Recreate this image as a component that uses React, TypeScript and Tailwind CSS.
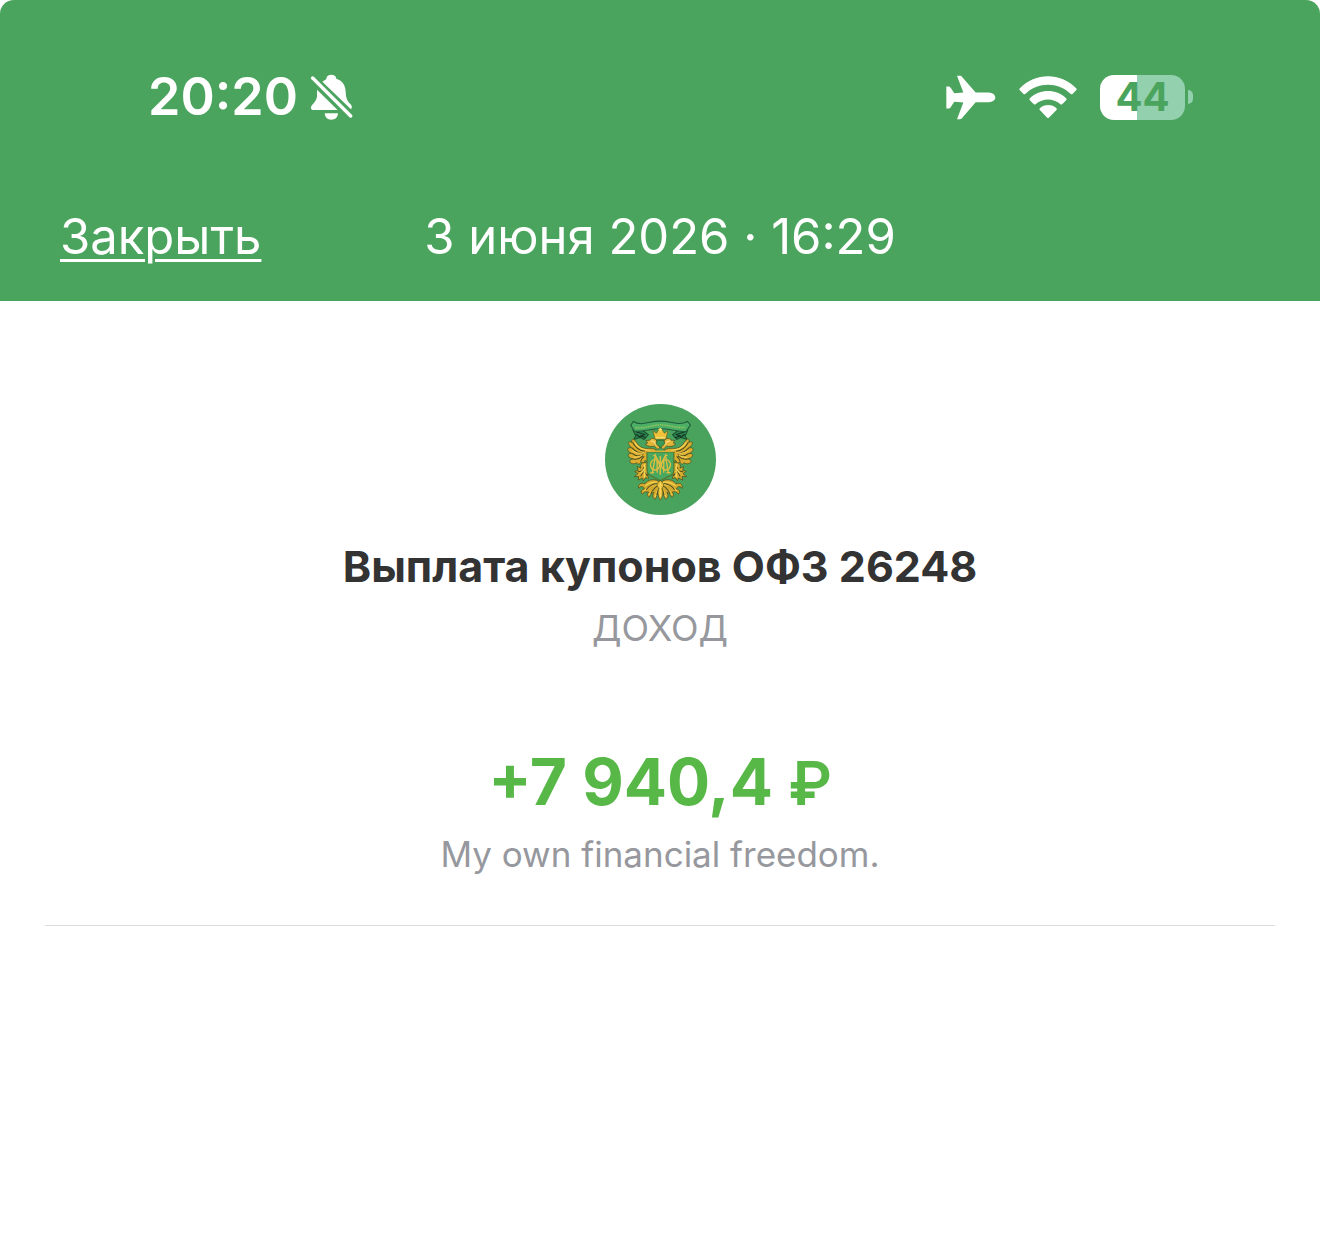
function BellOffIcon() {
  return (
    <svg viewBox="537 45 129 138" className="h-[46px] w-[43px]" fill="white" aria-label="Без звука" role="img">
      <path d="M558 92 L620 153 H548 C540 153 538 147 541 141 C549 131 557 125 558 111 Z" />
      <path d="M574 68 C580 63 585 62 586 59 C587 50 593 47 601 47 C609 47 615 50 616 59 C636 65 643 80 644 98 C645 121 650 127 659 136 C663 141 664 146 660 151 Z" />
      <path d="M581 163 H621 C620 175 613 182 601 182 C589 182 582 175 581 163 Z" />
      <path d="M545 57 L659 171" stroke="white" strokeWidth="10" strokeLinecap="round" />
    </svg>
  );
}

function PlaneIcon() {
  return (
    <svg viewBox="50 48 150 134" className="h-[45px] w-[50px]" fill="white" aria-label="Авиарежим" role="img">
      <path d="M83 50 H92 C95 50 97 52 99 54 L139 100 H178 C190 101 198 107 198 115 C198 123 190 128 178 129 H139 L99 176 C97 179 95 180 92 180 H83 L102 130 L75 128 L64 144 C62 147 60 148 57 148 H51 V82 H57 C60 82 62 83 64 86 L75 102 L102 100 Z" />
    </svg>
  );
}

function WifiIcon() {
  return (
    <svg viewBox="269 44 173 129" className="h-[43px] w-[58px]" fill="white" aria-label="Wi-Fi" role="img">
      <path d="M271 81 C317 33 394 33 440 81 Q443 84 440 87 L429 98 Q426 100 423 97 C386 61 325 61 288 97 Q285 100 282 98 L271 87 Q268 84 271 81 Z" />
      <path d="M301 111 C332 82 380 82 410 111 Q413 114 410 117 L398 129 Q395 131 392 128 C371 110 340 110 319 128 Q316 131 313 129 L301 117 Q298 114 301 111 Z" />
      <path d="M331 141 C345 128 367 128 381 141 Q383 144 381 146 L358 169 Q356 171 353 169 L331 146 Q328 144 331 141 Z" />
    </svg>
  );
}

function Battery() {
  return (
    <div className="flex items-center gap-[3px]" role="img" aria-label="Заряд 44%">
      <div className="flex h-[45px] w-[85px] items-center justify-center rounded-[14px] bg-linear-to-r from-white from-[44%] to-[#93d0ad] to-[44%] text-[40px] leading-none font-bold text-[#4aa45d]">
        44
      </div>
      <div className="h-[14px] w-[5px] rounded-r-full bg-[#93d0ad]" />
    </div>
  );
}

function WingHalf() {
  return (
    <g stroke="#4a4a1c" strokeWidth="2" strokeLinejoin="round">
      <path fill="#dcae30" d="M183 166 C169 157 154 166 140 158 C132 154 129 144 119 135 C113 134 112 139 115 145 C106 140 102 144 106 151 C108 156 113 158 116 161 C106 158 100 161 103 168 C105 173 111 175 116 177 C107 175 102 178 104 184 C107 190 113 191 118 192 C110 194 106 197 109 202 C114 208 123 207 128 203 C131 210 138 207 140 200 C143 206 150 204 151 197 L159 199 V174 H183 Z" />
      <path fill="none" strokeWidth="3" d="M116 145 C124 160 139 169 151 170 M115 161 C124 171 138 176 148 177 M116 177 C124 185 136 184 145 181 M118 192 C129 195 138 190 145 184 M139 199 C141 193 144 189 149 185" />
      <path fill="none" stroke="#f8d75b" strokeWidth="3" d="M122 145 C131 161 145 165 165 168 M115 168 C128 177 140 177 149 174 M119 187 C130 189 137 185 143 181" />
      <path fill="#e3b63a" d="M188 165 L178 155 C171 157 160 157 152 150 L159 146 L154 139 L165 138 C170 129 183 132 187 144 L194 158 Z" />
      <path fill="none" stroke="#f9e18a" strokeWidth="3" d="M168 141 C177 137 181 147 184 153" />
      <path fill="#d8ad2f" d="M155 202 C142 202 135 210 140 219 L129 214 L132 225 L122 228 L131 235 L121 243 L134 243 L132 253 L144 247 L147 255 L153 246 L162 249 L158 237 L168 237 L159 225 L163 214 Z" />
      <path fill="none" strokeWidth="3" d="M151 211 L144 226 L130 230 M147 228 L139 243 M150 229 L158 241" />
      <path fill="none" stroke="#f6d65b" strokeWidth="4" d="M149 207 L151 219 L140 233 M151 226 L150 245" />
      <path fill="#d3a92e" d="M190 256 C177 249 160 251 151 264 C140 259 131 265 133 277 C139 269 147 271 150 279 C140 279 138 290 144 294 C149 285 157 286 162 288 C155 294 158 302 164 302 C167 292 173 290 177 288 C172 297 173 306 181 308 C186 297 191 287 195 275 Z" />
      <path fill="none" stroke="#f5d451" strokeWidth="3" d="M190 260 C175 257 163 261 152 270 M190 265 C172 265 160 273 149 284 M192 270 C178 275 169 284 163 296 M194 273 C187 282 182 292 180 303" />
      <path fill="none" strokeWidth="3" d="M185 263 C171 265 161 272 155 281 M188 270 C176 278 171 285 168 293 M192 277 C188 283 187 289 185 296" />
    </g>
  );
}

function RibbonEnd() {
  return (
    <g stroke="#1c5133" strokeWidth="3" strokeLinejoin="round">
      <path fill="#29834a" d="M117 108 L125 126 L119 136 L137 130 L149 136 L161 122 L145 110 Z" />
      <path fill="none" stroke="#162f24" d="M126 114 L151 122 L138 126 L154 131 M126 121 L139 131" />
    </g>
  );
}

function Emblem() {
  return (
    <svg viewBox="28 27 333 333" className="size-[111px]" role="img" aria-label="Герб Министерства финансов">
      <circle cx="194.5" cy="193.5" r="166.5" fill="#49a35d" />
      <g transform="translate(-11 -8) scale(1.05 1.04)">
        <RibbonEnd />
        <g transform="translate(391 0) scale(-1 1)">
          <RibbonEnd />
        </g>
        <path d="M118 84 C143 99 161 83 195 83 C229 83 247 98 273 84 L281 94 L269 113 C242 113 223 105 195 105 C168 105 146 114 121 112 L111 95 Z" fill="#4caf65" stroke="#20593a" strokeWidth="3" />
        <path d="M125 102 C152 105 169 94 195 94 C221 94 239 104 266 101" fill="none" stroke="#9dc95d" strokeWidth="4" strokeDasharray="3 2" />
        <WingHalf />
        <g transform="translate(391 0) scale(-1 1)">
          <WingHalf />
        </g>
        <path d="M180 135 L174 110 L184 118 L191 107 H200 L207 118 L217 110 L211 135 Z" fill="#efc23a" stroke="#5d6123" strokeWidth="2" />
        <path d="M195 103 V113 M190 107 H200 M182 131 H209" stroke="#f7de70" strokeWidth="4" />
        <path d="M186 138 H205 L208 148 L196 160 L183 148 Z" fill="#3b9956" stroke="#345320" strokeWidth="2" />
        <path d="M157 172 H234 V224 Q234 239 218 243 L195 255 L173 243 Q157 239 157 224 Z" fill="#48a85f" stroke="#56702a" strokeWidth="3" />
        <path d="M157 170 H234" stroke="#dfb337" strokeWidth="4" />
        <g fill="none" stroke="#e0bd40" strokeWidth="4">
          <ellipse cx="180" cy="209" rx="13" ry="15" />
          <ellipse cx="211" cy="209" rx="13" ry="15" />
          <path d="M167 232 H177 M173 232 L181 182 L195 212 L210 182 L218 232 M213 232 H224 M186 190 V232 M205 190 V232 M175 182 H183 M208 182 H216 M195 184 V238" />
        </g>
        <path d="M195 311 C187 299 187 286 191 277 C183 271 184 261 195 254 C206 261 207 271 200 277 C204 286 204 299 195 311 Z" fill="#e5b931" stroke="#514e1e" strokeWidth="2" />
        <path d="M195 260 V303 M190 268 H201" stroke="#fbdf69" strokeWidth="3" />
      </g>
    </svg>
  );
}

export default function App() {
  return (
    <div className="min-h-screen bg-white font-['Inter',sans-serif]">
      <header className="rounded-t-[14px] bg-[#4aa45d] pt-[72px] pb-[32px] text-white">
        <div className="flex h-[50px] items-center justify-between pr-[127px] pl-[148px]">
          <div className="flex items-center gap-3">
            <time className="text-[52px] leading-[54px] font-semibold">20:20</time>
            <BellOffIcon />
          </div>
          <div className="flex items-center gap-[23px]">
            <PlaneIcon />
            <WifiIcon />
            <Battery />
          </div>
        </div>
        <nav className="mt-[83px] grid grid-cols-[1fr_auto_1fr] items-center px-[60px] text-[49px] leading-[64px]">
          <button type="button" className="cursor-pointer justify-self-start underline decoration-[3px] underline-offset-[5px]">
            Закрыть
          </button>
          <h1>3 июня 2026 · 16:29</h1>
        </nav>
      </header>
      <main className="px-[45px]">
        <section className="flex flex-col items-center border-b border-[#dcdcde] pt-[103px] pb-[47px] text-center">
          <Emblem />
          <h2 className="mt-[24px] text-[43px] leading-[54px] font-bold text-[#333334]">Выплата купонов ОФЗ 26248</h2>
          <p className="mt-[11px] text-[36px] leading-[48px] text-[#96989e]">ДОХОД</p>
          <p className="mt-[90px] text-[64px] leading-[80px] font-bold text-[#57b847]">
            +7 940,4 <span className="text-[60px] font-semibold">₽</span>
          </p>
          <p className="mt-[7px] text-[35px] leading-[48px] text-[#96989e]">My own financial freedom.</p>
        </section>
      </main>
    </div>
  );
}
